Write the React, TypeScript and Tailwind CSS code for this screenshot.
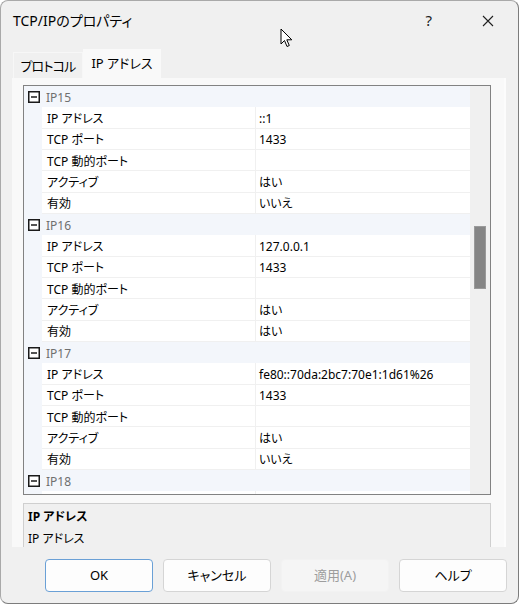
import React from "react";

const FONT = "[font-family:'Noto_Sans','Noto_Sans_CJK_JP',sans-serif] [font-feature-settings:'palt']";

type Row = { name: string; value: string };
type Group = { title: string; rows: Row[] };

const groups: Group[] = [
  {
    title: "IP15",
    rows: [
      { name: "IP アドレス", value: "::1" },
      { name: "TCP ポート", value: "1433" },
      { name: "TCP 動的ポート", value: "" },
      { name: "アクティブ", value: "はい" },
      { name: "有効", value: "いいえ" },
    ],
  },
  {
    title: "IP16",
    rows: [
      { name: "IP アドレス", value: "127.0.0.1" },
      { name: "TCP ポート", value: "1433" },
      { name: "TCP 動的ポート", value: "" },
      { name: "アクティブ", value: "はい" },
      { name: "有効", value: "はい" },
    ],
  },
  {
    title: "IP17",
    rows: [
      { name: "IP アドレス", value: "fe80::70da:2bc7:70e1:1d61%26" },
      { name: "TCP ポート", value: "1433" },
      { name: "TCP 動的ポート", value: "" },
      { name: "アクティブ", value: "はい" },
      { name: "有効", value: "いいえ" },
    ],
  },
  {
    title: "IP18",
    rows: [{ name: "", value: "" }],
  },
];

function MinusBox() {
  return (
    <svg width="12" height="12" viewBox="0 0 12 12" className="block">
      <rect x="0.75" y="0.75" width="10.5" height="10.5" fill="white" stroke="#1a1a1a" strokeWidth="1.5" />
      <line x1="3" y1="6" x2="9" y2="6" stroke="#1a1a1a" strokeWidth="1.5" />
    </svg>
  );
}

function Category({ title }: { title: string }) {
  return (
    <div className="flex h-[21.33px] shrink-0 items-center bg-[#f3f6fb]">
      <div className="flex w-[19px] shrink-0 items-center justify-center pl-[1px]">
        <MinusBox />
      </div>
      <span className="pl-[3px] pt-[2px] text-[12px] text-[#6f6f6f]">{title}</span>
    </div>
  );
}

function PropRow({ row }: { row: Row }) {
  return (
    <div className="flex h-[21.33px] shrink-0">
      <div className="w-[18px] shrink-0 bg-[#f3f6fb]" />
      <div className="flex w-[214px] shrink-0 items-center border-r border-b border-[#f0f0f0] bg-white pl-[5px] pt-[3px] text-[12px] text-black">
        {row.name}
      </div>
      <div className="flex flex-1 items-center border-b border-[#f0f0f0] bg-white pl-[3px] pt-[3px] text-[12px] text-black">
        {row.value}
      </div>
    </div>
  );
}

function Button({ label, primary, disabled }: { label: string; primary?: boolean; disabled?: boolean }) {
  return (
    <div
      className={
        "flex h-[33px] w-[108px] items-center justify-center rounded-[4px] border pt-[1px] text-[13px] " +
        (primary
          ? "border-[#6aa0d6] bg-[#fdfdfd] text-black"
          : disabled
          ? "border-[#f2f2f2] bg-[#f5f5f5] text-[#9d9d9d]"
          : "border-[#d5d5d5] bg-[#fdfdfd] text-black")
      }
    >
      {label}
    </div>
  );
}

export default function App() {
  return (
    <div className={"relative h-[604px] w-[519px] bg-white " + FONT}>
      <div className="flex h-[604px] w-[519px] flex-col overflow-hidden rounded-[8px] border border-[#a9a9a9] border-r-[#7c7c7c] border-b-[#7c7c7c] bg-[#f0f0f0]">
        {/* Title bar */}
        <div className="flex h-[39px] shrink-0 items-center pl-[12px]">
          <span className="text-[14px] text-black">TCP/IPのプロパティ</span>
          <div className="flex-1" />
          <span className="mr-[50px] text-[15px] text-[#202020]">?</span>
          <svg width="12" height="12" viewBox="0 0 12 12" className="mr-[24px]">
            <path d="M1 1 L11 11 M11 1 L1 11" stroke="#202020" strokeWidth="1.1" />
          </svg>
        </div>

        {/* Tabs */}
        <div className="flex h-[38px] shrink-0 items-end pl-[12px]">
          <div className="flex h-[26px] w-[70px] items-center justify-center border border-b-0 border-[#f7f7f7] bg-[#f0f0f0] pt-[2px] text-[13px] tracking-[-0.8px] text-black">
            プロトコル
          </div>
          <div className="flex h-[29px] w-[78px] items-center justify-center bg-[#f9f9f9] text-[13px] text-black">
            IP アドレス
          </div>
        </div>

        {/* Panel */}
        <div className="ml-[11px] flex h-[469px] w-[494px] shrink-0 flex-col overflow-hidden border-r-2 border-[#fcfcfc] bg-[#f9f9f9] pl-[11px] pt-[7px]">
          {/* Property grid */}
          <div className="flex h-[410px] w-[468px] shrink-0 border border-[#828282] bg-white">
            <div className="flex flex-1 flex-col overflow-hidden">
              {groups.map((g) => (
                <React.Fragment key={g.title}>
                  <Category title={g.title} />
                  {g.rows.map((r, i) => (
                    <PropRow key={i} row={r} />
                  ))}
                </React.Fragment>
              ))}
            </div>
            <div className="flex w-[20px] shrink-0 flex-col bg-[#f0f0f0] pl-[4px] pt-[140px]">
              <div className="h-[63px] w-[12px] border border-[#9a9a9a] bg-[#858585]" />
            </div>
          </div>

          {/* Description */}
          <div className="mt-[8px] h-[50px] w-[468px] shrink-0 overflow-hidden border border-b-0 border-[#cfcfcf] bg-[#f0f0f0] pl-[4px] pt-[2px]">
            <div className="text-[12px] font-bold leading-[22px] text-black">IP アドレス</div>
            <div className="text-[12px] leading-[22px] text-black">IP アドレス</div>
          </div>
        </div>

        {/* Buttons */}
        <div className="mt-[12px] flex gap-[10px] pl-[44px]">
          <Button label="OK" primary />
          <Button label="キャンセル" />
          <Button label="適用(A)" disabled />
          <Button label="ヘルプ" />
        </div>
      </div>

      {/* Mouse cursor overlay */}
      <svg width="14" height="20" viewBox="0 0 14 20" className="absolute left-[280px] top-[28px]">
        <path
          d="M1 1 L1 16 L4.5 12.5 L7 18.5 L9.3 17.5 L6.8 11.8 L11.8 11.8 Z"
          fill="white"
          stroke="black"
          strokeWidth="1"
          strokeLinejoin="round"
        />
      </svg>
    </div>
  );
}
